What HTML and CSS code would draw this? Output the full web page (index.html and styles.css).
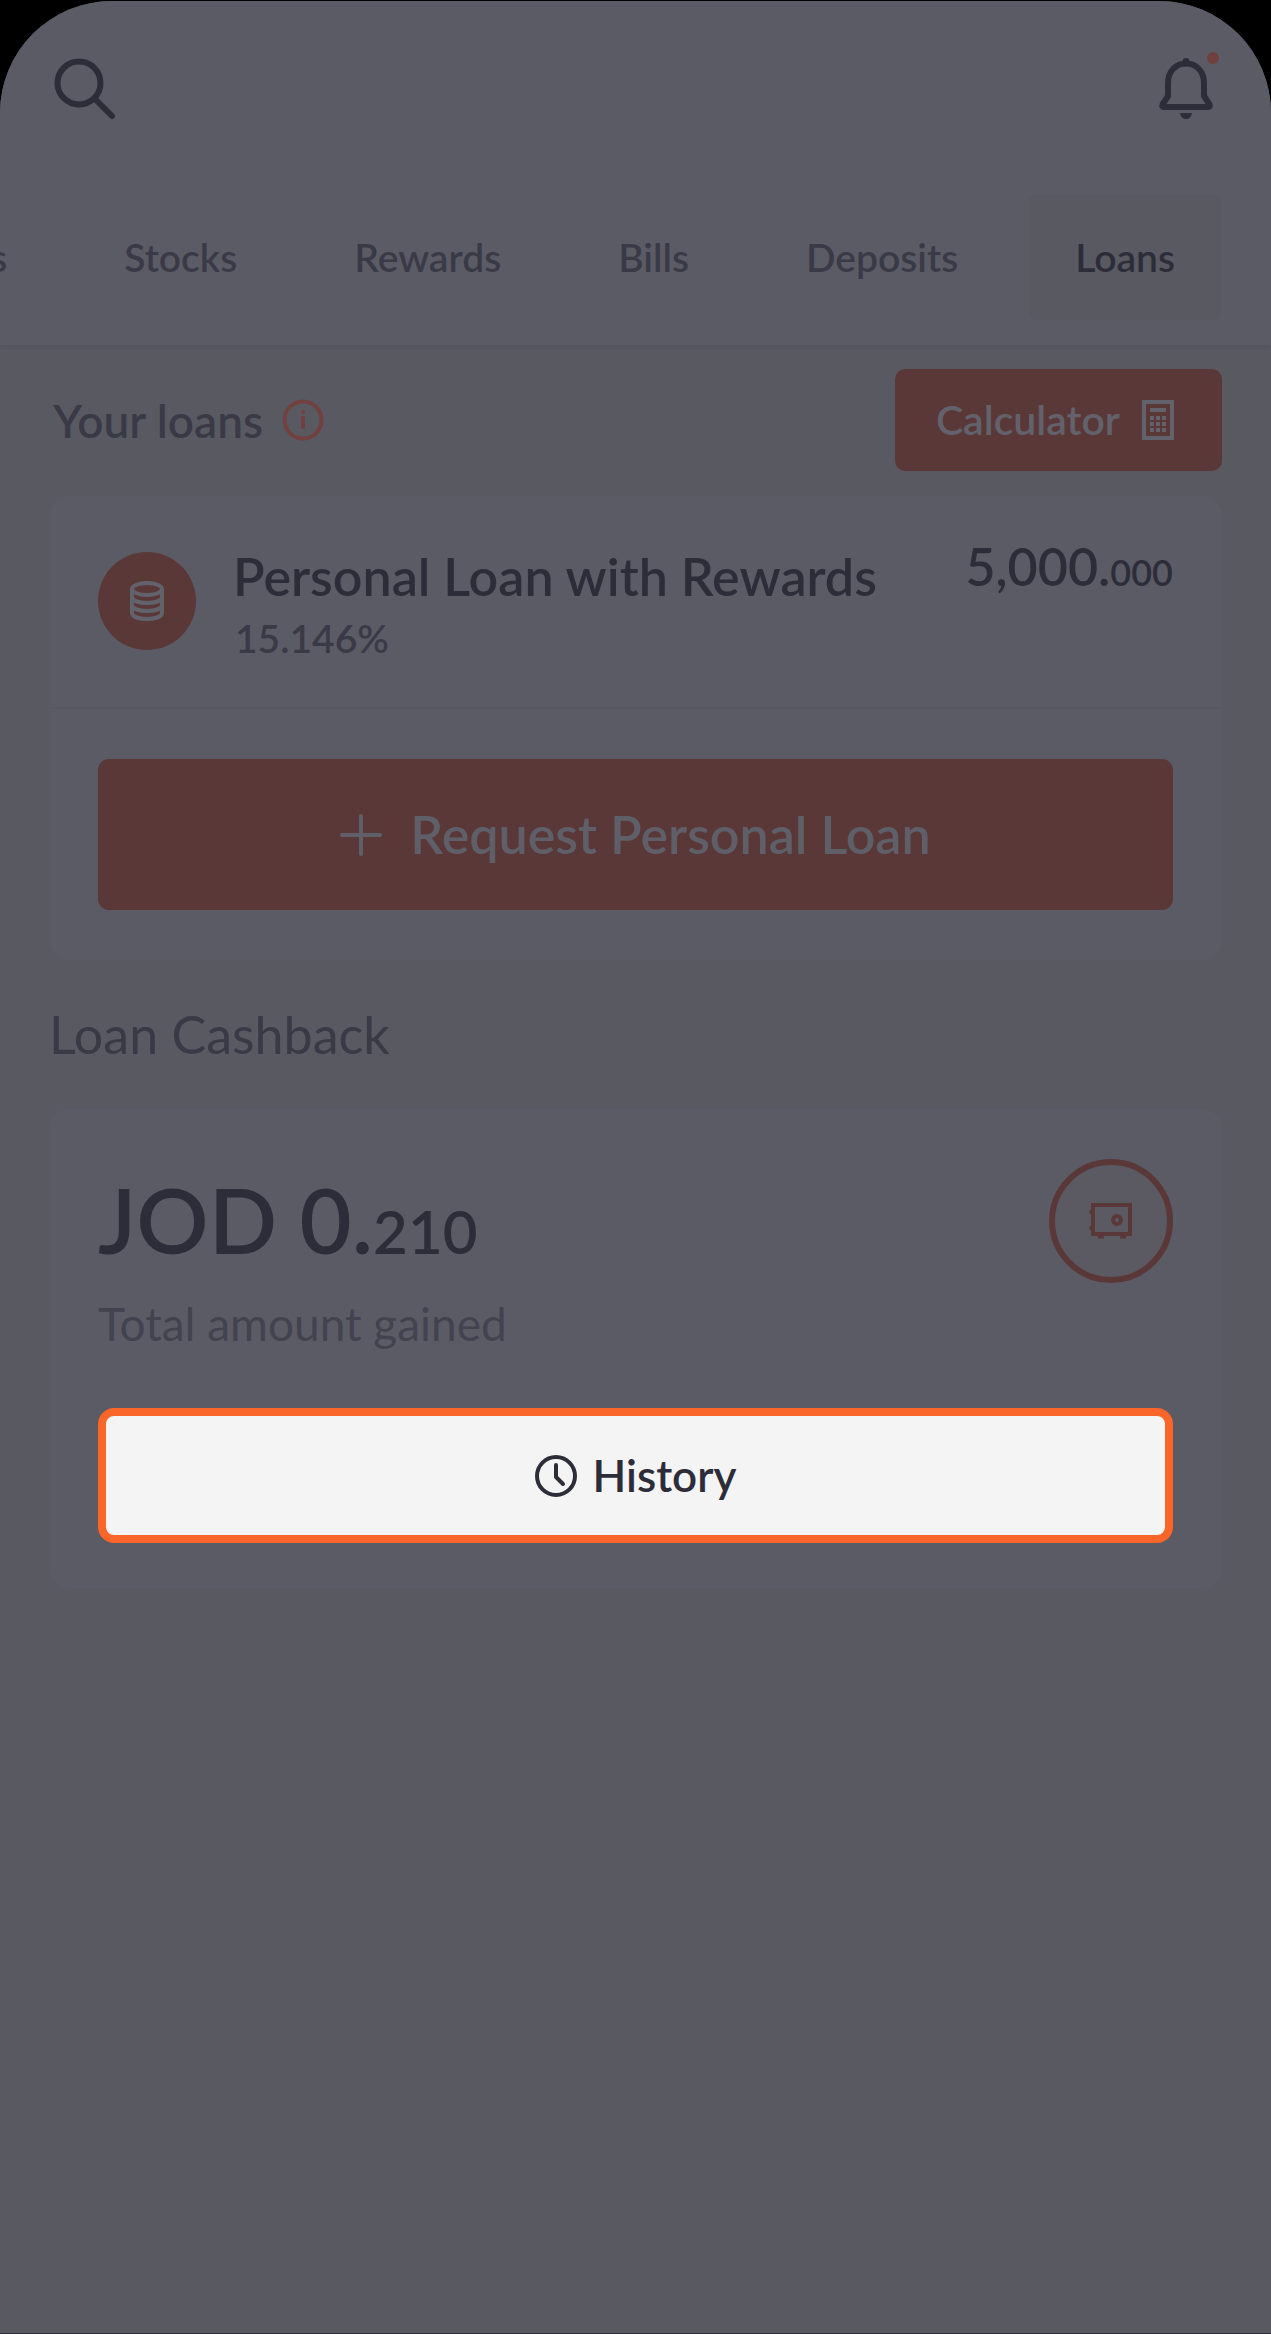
FILE: index.html
```html
<!DOCTYPE html>
<html lang="en">
<head>
  <meta charset="UTF-8">
  <meta name="viewport" content="width=device-width, initial-scale=1">
  <title>Loans</title>
  <link rel="stylesheet" href="styles.css">
</head>
<body>
  <div class="screen">
    <header class="header">
      <div class="top-bar">
        <button class="icon-button" aria-label="Search">
          <svg width="64" height="64" viewBox="0 0 64 64" fill="none" stroke="currentColor" stroke-width="6" stroke-linecap="round">
            <circle cx="27" cy="26" r="21.5"/>
            <path d="M43 42L60 59"/>
          </svg>
        </button>
        <button class="icon-button" aria-label="Notifications">
          <svg width="66" height="72" viewBox="0 0 66 72">
            <path d="M33 16.5C23 16.5 15 24 15 36v13l-5.5 8.5q-1 2.5 1.5 2.5h44q2.500 0 1.5-2.5L51 49V36C51 24 43 16.5 33 16.5z" fill="none" stroke="currentColor" stroke-width="6" stroke-linejoin="round"/>
            <circle cx="33" cy="14.5" r="3.5" fill="currentColor"/>
            <path d="M27 66h12q-1 6-6 6t-6-6" fill="currentColor"/>
            <circle cx="60" cy="11" r="6" fill="#6f403d"/>
          </svg>
        </button>
      </div>
      <nav class="tabs">
        <a href="#" class="tab">Accounts</a>
        <a href="#" class="tab">Stocks</a>
        <a href="#" class="tab">Rewards</a>
        <a href="#" class="tab">Bills</a>
        <a href="#" class="tab">Deposits</a>
        <a href="#" class="tab selected">Loans</a>
      </nav>
    </header>

    <main class="content">
      <div class="loans-heading">
        <h2>Your loans</h2>
        <button class="info-button" aria-label="About your loans">
          <svg width="42" height="42" viewBox="0 0 42 42" fill="none" stroke="currentColor">
            <circle cx="21" cy="21" r="18.5" stroke-width="4"/>
            <path d="M21 19v9M21 13v.1" stroke-width="4" stroke-linecap="round"/>
          </svg>
        </button>
        <button class="calculator-button">
          Calculator
          <svg width="32" height="40" viewBox="0 0 32 40" fill="none" stroke="currentColor">
            <rect x="2" y="2" width="28" height="36" stroke-width="4"/>
            <path d="M8 10h16" stroke-width="4"/>
            <path d="M8 18h16M8 24h16M8 30h16" stroke-width="4" stroke-dasharray="4 2"/>
          </svg>
        </button>
      </div>

      <section class="card loan-card">
        <div class="loan">
          <span class="loan-icon">
            <svg width="36" height="40" viewBox="0 0 36 40" fill="none" stroke="currentColor" stroke-width="4">
              <ellipse cx="18" cy="8" rx="15" ry="6"/>
              <path d="M3 8v24c0 8 30 8 30 0V8M3 16c0 8 30 8 30 0M3 24c0 8 30 8 30 0"/>
            </svg>
          </span>
          <div class="loan-name">
            <h3>Personal Loan with Rewards</h3>
            <p>15.146%</p>
          </div>
          <p class="loan-amount">5,000.<small>000</small></p>
        </div>
        <div class="loan-action">
          <button class="request-button">
            <svg width="42" height="42" viewBox="0 0 42 42" fill="none" stroke="currentColor" stroke-width="4" stroke-linecap="round">
              <path d="M21 2v38M2 21h38"/>
            </svg>
            Request Personal Loan
          </button>
        </div>
      </section>

      <h2 class="cashback-title">Loan Cashback</h2>

      <section class="card cashback-card">
        <div class="cashback">
          <div>
            <p class="cashback-amount">JOD 0.<small>210</small></p>
            <p class="cashback-label">Total amount gained</p>
          </div>
          <span class="safe-icon">
            <svg width="44" height="38" viewBox="0 0 44 38" fill="none" stroke="currentColor" stroke-width="4">
              <rect x="4" y="3" width="37" height="29"/>
              <circle cx="28" cy="18" r="4"/>
              <path d="M9 35h6M31 35h6" stroke-width="3"/>
              <path d="M2 8v4M2 24v4" stroke-width="3"/>
            </svg>
          </span>
        </div>
        <button class="history-button">
          <svg width="42" height="42" viewBox="0 0 42 42" fill="none" stroke="currentColor" stroke-width="4" stroke-linecap="round" stroke-linejoin="round">
            <circle cx="21" cy="21" r="19"/>
            <path d="M21 10v12l7 7"/>
          </svg>
          History
        </button>
      </section>
    </main>
  </div>
</body>
</html>
```

FILE: styles.css
```css
* {
  box-sizing: border-box;
}

body {
  font-family: Lato, sans-serif;
  font-weight: 600;
  color: #2d2d3a;
  background-color: #000;
  margin: 0;
  padding-top: 1px;
}

h2, h3, p {
  margin: 0;
  font-weight: inherit;
}

svg {
  display: block;
  flex-shrink: 0;
}

small {
  line-height: 1;
}

button {
  font: inherit;
  color: inherit;
  background: none;
  border: none;
  padding: 0;
  cursor: pointer;
}

.screen {
  display: flex;
  flex-direction: column;
  min-height: calc(100vh - 1px);
  background-color: #595962;
  border-bottom: 1px solid #2d2d3a;
  border-radius: 112px 112px 0 0;
  overflow: hidden;
}

.header {
  background-color: #5b5b66;
  box-shadow: 0 2px 4px rgba(45, 45, 58, 0.1);
}

.top-bar {
  display: flex;
  justify-content: space-between;
  align-items: flex-start;
  height: 193px;
  padding: 46px 52px 0;
}

.top-bar .icon-button:first-child {
  padding-top: 10px;
}

.tabs {
  display: flex;
  justify-content: flex-end;
  gap: 25px;
  padding: 0 50px 25px 0;
}

.tab {
  flex-shrink: 0;
  padding: 0 46px;
  font-size: 39px;
  line-height: 126px;
  border-radius: 8px;
  color: #3a3a47;
  text-decoration: none;
}

.tab.selected {
  color: #2d2d3a;
  background-color: #595961;
}

.content {
  padding: 24px 49px;
}

.loans-heading {
  display: flex;
  align-items: center;
}

.loans-heading h2 {
  padding-left: 4px;
  font-size: 46px;
  color: #3a3a47;
}

.info-button {
  margin-left: 19px;
  color: #71413f;
}

.calculator-button {
  display: flex;
  align-items: center;
  gap: 22px;
  margin-left: auto;
  padding: 0 48px 0 41px;
  font-size: 41px;
  line-height: 102px;
  border-radius: 10px;
  color: #62626d;
  background-color: #5b3838;
}

.card {
  background-color: #5b5b66;
  border-radius: 20px;
}

.loan-card {
  margin-top: 25px;
}

.loan {
  display: flex;
  align-items: flex-start;
  height: 213px;
  padding: 50px 49px 0;
  border-bottom: 2px solid #585863;
}

.loan-icon {
  display: flex;
  align-items: center;
  justify-content: center;
  width: 98px;
  height: 98px;
  margin: 6px 37px 0 0;
  border-radius: 50%;
  color: #62626d;
  background-color: #5b3838;
}

.loan-name h3 {
  font-size: 52px;
  line-height: 60px;
}

.loan-name p {
  padding-left: 2px;
  font-size: 39px;
  line-height: 64px;
  color: #3a3a47;
}

.loan-amount {
  margin-left: auto;
  font-size: 52px;
  line-height: 40px;
}

.loan-amount small {
  font-size: 36px;
}

.loan-action {
  padding: 50px 49px;
}

.request-button {
  display: flex;
  align-items: center;
  justify-content: center;
  gap: 28px;
  width: 100%;
  font-size: 52px;
  line-height: 151px;
  border-radius: 11px;
  color: #5f5f6a;
  background-color: #5b3838;
}

.cashback-title {
  padding: 36px 0 37px;
  font-size: 52px;
  font-weight: 400;
  line-height: 76px;
  color: #3a3a47;
}

.cashback-card {
  padding: 50px 49px 45px;
}

.cashback {
  display: flex;
  justify-content: space-between;
}

.cashback-amount {
  font-size: 90px;
  line-height: 121px;
}

.cashback-amount small {
  font-size: 60px;
}

.cashback-label {
  font-size: 46px;
  font-weight: 400;
  line-height: 87px;
  color: #43434f;
}

.safe-icon {
  display: flex;
  align-items: center;
  justify-content: center;
  width: 124px;
  height: 124px;
  border: 6px solid #5b3838;
  border-radius: 50%;
  color: #5b3838;
  background-color: #5b5962;
}

.history-button {
  display: flex;
  align-items: center;
  justify-content: center;
  gap: 16px;
  width: 100%;
  margin-top: 41px;
  font-size: 44px;
  line-height: 119px;
  border: 8px solid #fa652a;
  border-radius: 16px;
  background-color: #f4f4f4;
}
```
